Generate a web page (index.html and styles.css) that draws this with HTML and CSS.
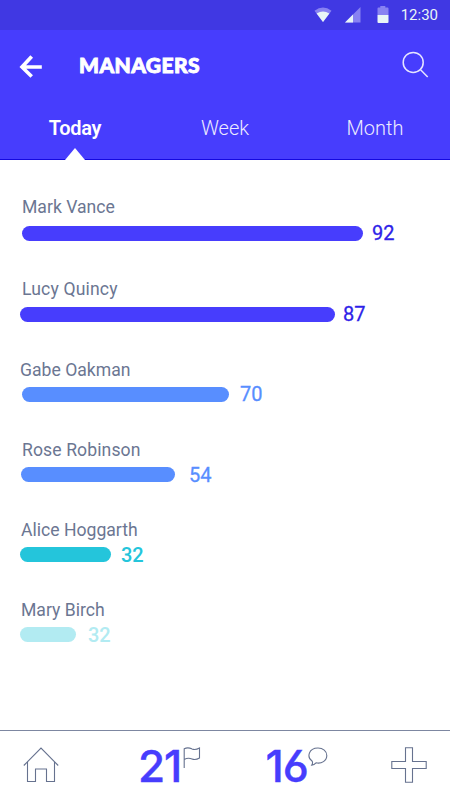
FILE: index.html
```html
<!DOCTYPE html>
<html lang="en">
<head>
  <meta charset="UTF-8">
  <meta name="viewport" content="width=device-width, initial-scale=1">
  <title>Managers</title>
  <link rel="stylesheet" href="styles.css">
</head>
<body>
  <div class="status-bar">
    <svg class="wifi" width="18" height="16" viewBox="0 0 18 16">
      <path d="M0.5 3.8Q9 -2.8 17.5 3.8L9 15Z" fill="#8882f2"/>
      <path d="M2.6 6.4Q9 2.6 15.4 6.4L9 15Z" fill="#e8f5f6"/>
    </svg>
    <svg class="signal" width="16" height="16" viewBox="0 0 16 16">
      <path d="M15.5 0V15.5H0Z" fill="#8882f2"/>
      <path d="M8 7.5V15.5H0Z" fill="#e8f5f6"/>
    </svg>
    <svg class="battery" width="12" height="17" viewBox="0 0 12 17">
      <path d="M3.3 0H8.3V1.5H10.5Q11.5 1.5 11.5 2.5V9H0.5V2.5Q0.5 1.5 1.5 1.5H3.3Z" fill="#8882f2"/>
      <path d="M0.5 9H11.5V16Q11.5 17 10.5 17H1.5Q0.5 17 0.5 16Z" fill="#e8f5f6"/>
    </svg>
    <span class="time">12:30</span>
  </div>

  <header>
    <div class="title-bar">
      <svg class="back" width="24" height="24" viewBox="0 0 24 24" fill="none" stroke="#fff" stroke-width="3.6">
        <path d="M12.7 1.5L3 12L12.7 21.5M3 12H22.8"/>
      </svg>
      <h1>MANAGERS</h1>
      <svg class="search" width="28" height="28" viewBox="0 0 28 28" fill="none" stroke="#e6e5ff" stroke-width="1.5">
        <circle cx="11.2" cy="11.4" r="10"/>
        <path d="M18.3 18.5L25.7 26"/>
      </svg>
    </div>
    <nav class="tabs">
      <a class="tab active">Today</a>
      <a class="tab">Week</a>
      <a class="tab">Month</a>
    </nav>
  </header>

  <main>
    <div class="row mark">
      <div class="name">Mark Vance</div>
      <div class="score"><div class="bar" style="width: 341px"></div><span>92</span></div>
    </div>
    <div class="row lucy">
      <div class="name">Lucy Quincy</div>
      <div class="score"><div class="bar" style="width: 315px"></div><span>87</span></div>
    </div>
    <div class="row gabe">
      <div class="name">Gabe Oakman</div>
      <div class="score"><div class="bar" style="width: 207px"></div><span>70</span></div>
    </div>
    <div class="row rose">
      <div class="name">Rose Robinson</div>
      <div class="score"><div class="bar" style="width: 154px"></div><span>54</span></div>
    </div>
    <div class="row alice">
      <div class="name">Alice Hoggarth</div>
      <div class="score"><div class="bar" style="width: 91px"></div><span>32</span></div>
    </div>
    <div class="row mary">
      <div class="name">Mary Birch</div>
      <div class="score"><div class="bar" style="width: 56px"></div><span>32</span></div>
    </div>
  </main>

  <footer>
    <svg class="home" width="36" height="36" viewBox="0 0 36 36" fill="none" stroke="#66728f" stroke-width="1.1">
      <path d="M0.8 18.5L18 1L35.2 18.5M4.5 15V34.5H12.5V22H23.5V34.5H31.5V15"/>
    </svg>
    <div class="count flags">
      <span>21</span>
      <svg width="18" height="22" viewBox="0 0 18 22" fill="none" stroke="#66728f" stroke-width="1.1">
        <path d="M1.2 21V1.8C5 -0.2 7 1 9 2C11.5 3 14 2.4 16.5 1V11C14 12.5 11.5 13 9 12C6.5 11 4 11 1.2 12.5"/>
      </svg>
    </div>
    <div class="count comments">
      <span>16</span>
      <svg width="20" height="20" viewBox="0 0 20 20" fill="none" stroke="#66728f" stroke-width="1.1">
        <path d="M4.2 14.2C-1.5 10.3 0.5 1 10 1C15 1 18.8 4.2 18.8 8.5C18.8 13.8 13.5 17 8 15.8C6.8 17.2 5.5 18 3.7 18.2C4.6 16.8 4.8 15.5 4.2 14.2Z"/>
      </svg>
    </div>
    <svg class="add" width="36" height="36" viewBox="0 0 36 36" fill="none" stroke="#66728f" stroke-width="1.1">
      <path d="M14.5 0.8H21.5V14.5H35.2V21.5H21.5V35.2H14.5V21.5H0.8V14.5H14.5Z"/>
    </svg>
  </footer>
</body>
</html>
```
FILE: styles.css
```css
* {
  box-sizing: border-box;
}
body {
  margin: 0;
  height: 800px;
  display: flex;
  flex-direction: column;
  font-family: Roboto, sans-serif;
  background-color: #fff;
  overflow: hidden;
}
svg {
  display: block;
  flex: none;
}

.status-bar {
  height: 30px;
  padding-right: 12px;
  display: flex;
  align-items: center;
  justify-content: flex-end;
  background-color: #4038e3;
}
.signal {
  margin-left: 13px;
}
.battery {
  margin-left: 16px;
  margin-top: -1px;
}
.time {
  margin-left: 12px;
  font-size: 15px;
  line-height: 30px;
  color: #e8f5f6;
}

header {
  height: 130px;
  background-color: #473dfd;
  border-bottom: 1px solid #1408e0;
}
.title-bar {
  height: 70px;
  padding: 0 20px 0 19px;
  display: flex;
  align-items: center;
}
.back {
  margin-top: 4px;
}
h1 {
  margin: 0 0 2px 36px;
  flex: 1;
  font-family: Lato, sans-serif;
  font-size: 21px;
  font-weight: 900;
  letter-spacing: 0.4px;
  -webkit-text-stroke: 0.9px #fff;
  color: #fff;
}
.tabs {
  display: flex;
  height: 59px;
}
.tab {
  width: 150px;
  display: flex;
  flex-direction: column;
  align-items: center;
  font-size: 20px;
  font-weight: 300;
  line-height: 56px;
  color: #eceaff;
}
.tab.active {
  font-weight: 600;
  letter-spacing: -0.3px;
  color: #fff;
}
.tab.active::after {
  content: "";
  margin-top: -8px;
  border: 10px solid transparent;
  border-top: 0;
  border-bottom: 12px solid #fff;
}

main {
  flex: 1;
  padding: 37px 0 0 20px;
}
.row {
  height: 80px;
}
.name {
  height: 20px;
  padding-left: 1px;
  font-size: 17.6px;
  line-height: 20px;
  color: #6b7692;
}
.score {
  margin-top: 3px;
  height: 22px;
  display: flex;
  align-items: center;
  font-size: 20px;
  -webkit-text-stroke: 0.3px currentColor;
}
.bar {
  height: 15px;
  border-radius: 8px;
  background-color: currentColor;
}
.mark, .lucy {
  color: #2f1fe8;
}
.mark .bar, .lucy .bar {
  background-color: #473dfd;
}
.mark {
  height: 82px;
}
.mark .name {
  padding-left: 2px;
}
.mark .score {
  margin: 5px 0 0 2px;
}
.mark span {
  margin-left: 9px;
}
.lucy {
  height: 81px;
}
.lucy .name {
  padding-left: 2px;
  letter-spacing: 0.15px;
}
.lucy .score {
  margin-top: 4px;
}
.lucy span {
  margin-left: 8px;
}
.gabe, .rose {
  color: #588eff;
}
.gabe .name {
  padding-left: 0;
}
.gabe .score {
  margin-left: 2px;
}
.gabe span {
  margin-left: 11px;
}
.rose .name {
  padding-left: 2px;
  letter-spacing: 0.1px;
}
.rose .score {
  margin-left: 1px;
}
.rose span {
  margin-left: 14px;
}
.alice {
  color: #24c5db;
}
.alice span {
  margin-left: 10px;
}
.mary {
  color: #b2ebf2;
}
.mary span {
  margin-left: 12px;
}
.rose span, .alice span, .mary span {
  padding-top: 1px;
}
.alice span, .mary span {
  font-weight: 500;
  -webkit-text-stroke: 0;
}

footer {
  height: 70px;
  padding: 16px 23px 0 23px;
  display: flex;
  border-top: 1px solid #7d87a1;
}
.count {
  display: flex;
  font-family: Inter, sans-serif;
  font-size: 44px;
  font-weight: 550;
  font-feature-settings: "cv03", "cv04";
  letter-spacing: -1px;
  line-height: 38px;
  -webkit-text-stroke: 0.4px #473dfd;
  color: #473dfd;
}
.flags {
  margin-left: 79px;
}
.flags svg {
  margin-left: 2px;
}
.comments {
  margin-left: 64px;
}
.add {
  margin-left: auto;
}
```
